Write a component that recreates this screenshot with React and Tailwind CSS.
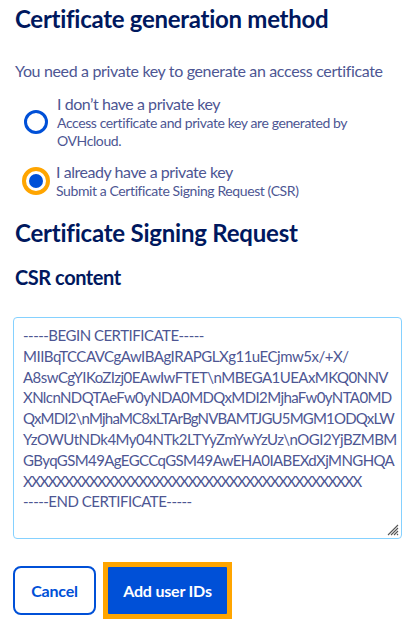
import React from "react";

const lines = [
  ["-----BEGIN CERTIFICATE-----", "-0.5px"],
  ["MIIBqTCCAVCgAwIBAgIRAPGLXg11uECjmw5x/+X/", "-0.5px"],
  ["A8swCgYIKoZIzj0EAwIwFTET\\nMBEGA1UEAxMKQ0NNV", "-0.55px"],
  ["XNlcnNDQTAeFw0yNDA0MDQxMDI2MjhaFw0yNTA0MD", "-0.6px"],
  ["QxMDI2\\nMjhaMC8xLTArBgNVBAMTJGU5MGM1ODQxLW", "-0.8px"],
  ["YzOWUtNDk4My04NTk2LTYyZmYwYzUz\\nOGI2YjBZMBM", "-0.5px"],
  ["GByqGSM49AgEGCCqGSM49AwEHA0IABEXdXjMNGHQA", "-0.6px"],
  ["XXXXXXXXXXXXXXXXXXXXXXXXXXXXXXXXXXXXXXXXX", "-1.5px"],
  ["-----END CERTIFICATE-----", "-0.5px"],
];

export default function App() {
  const font = { fontFamily: "Lato, 'Open Sans', sans-serif" };
  return (
    <div className="w-[415px] h-[625px] bg-white overflow-hidden px-[15px] pt-[4px] text-[#4d5693]" style={font}>
      <h1 className="text-[24px] leading-[30px] font-bold tracking-[-0.28px] text-[#00185e]">Certificate generation method</h1>
      <p className="mt-[26px] text-[16px] leading-[22px] tracking-[-0.35px]">You need a private key to generate an access certificate</p>

      <div className="mt-[12px] flex flex-col gap-[12px]">
        <label className="flex items-center gap-[9px] pl-[9px]">
          <span className="w-[24px] h-[24px] rounded-full border-[3px] border-[#0050d7] bg-white shrink-0" />
          <span className="flex flex-col">
            <span className="text-[16px] leading-[20px] tracking-[-0.45px]">I don’t have a private key</span>
            <span className="text-[14px] leading-[18px] tracking-[-0.4px]">Access certificate and private key are generated by OVHcloud.</span>
          </span>
        </label>
        <label className="flex items-center gap-[6px] pl-[7px]">
          <span className="w-[28px] h-[28px] rounded-full border-[4px] border-[#ffa500] bg-white shrink-0 flex items-center justify-center">
            <span className="w-[14px] h-[14px] rounded-full bg-[#0050d7]" />
          </span>
          <span className="flex flex-col">
            <span className="text-[16px] leading-[20px] tracking-[-0.45px]">I already have a private key</span>
            <span className="text-[14px] leading-[18px] tracking-[-0.4px]">Submit a Certificate Signing Request (CSR)</span>
          </span>
        </label>
      </div>

      <h2 className="mt-[18px] text-[24px] leading-[30px] font-bold tracking-[-0.22px] text-[#00185e]">Certificate Signing Request</h2>
      <h3 className="mt-[16px] text-[20px] leading-[26px] font-bold tracking-[-0.45px] text-[#00185e]">CSR content</h3>

      <div className="relative mt-[27px] -mx-[2px] h-[222px] rounded-[4px] border border-[#85d1ff] bg-white px-[9px] pt-[7px] overflow-hidden">
        <div className="text-[15px] leading-[20.8px] whitespace-pre text-[#4d5693]">
          {lines.map(([l, t], i) => (
            <div key={i} style={{ letterSpacing: t }}>{l}</div>
          ))}
        </div>
        <svg className="absolute right-[2px] bottom-[2px]" width="12" height="12" viewBox="0 0 12 12">
          <path d="M11 1 L1 11 M11 4 L4 11 M11 7 L7 11 M11 10 L10 11" stroke="#555" strokeWidth="1.1" />
        </svg>
      </div>

      <div className="mt-[23px] flex items-center gap-[7px] -ml-[2px]">
        <button className="w-[83px] h-[49px] rounded-[8px] border-2 border-[#0050d7] text-[#0050d7] font-bold text-[16px] tracking-[-0.2px]">Cancel</button>
        <div className="p-[5px] bg-[#ffa500]">
          <button className="w-[119px] h-[47px] bg-[#0050d7] text-white font-bold text-[16px] tracking-[-0.2px] rounded-[1px]">Add user IDs</button>
        </div>
      </div>
    </div>
  );
}
